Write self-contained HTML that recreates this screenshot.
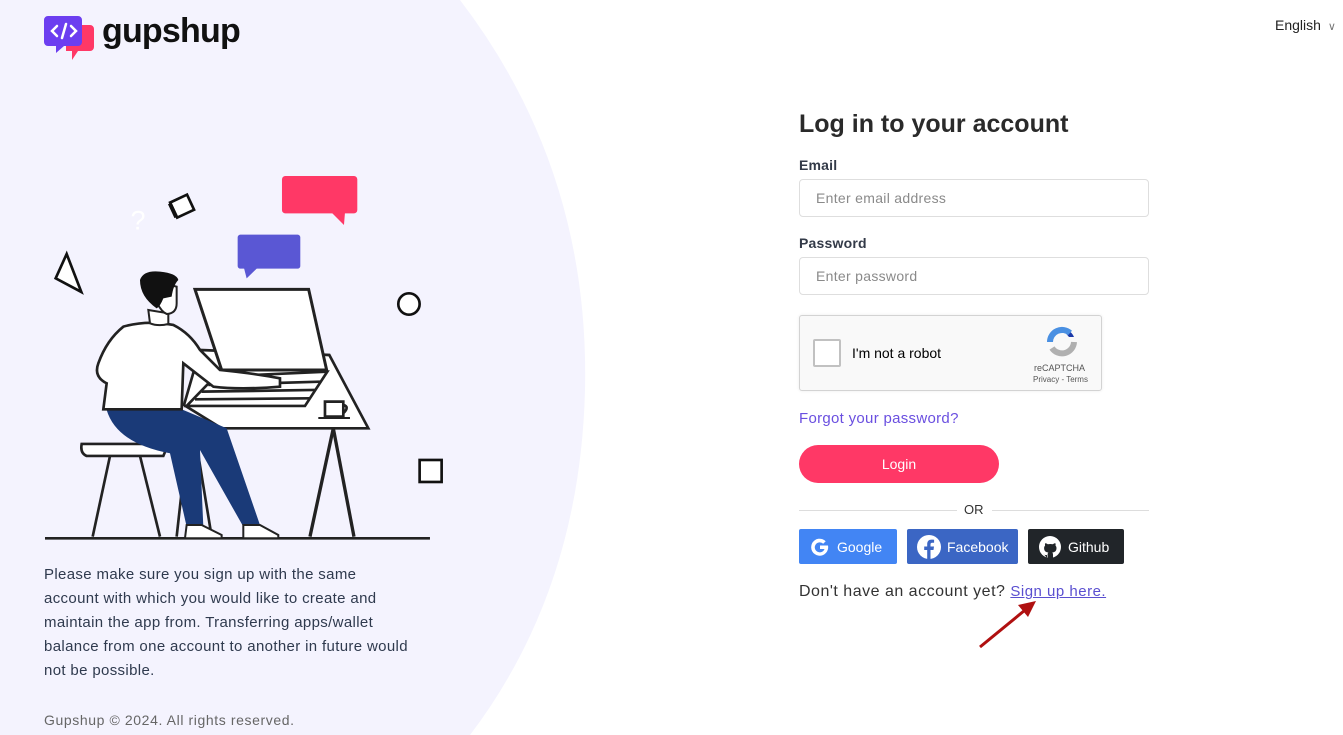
<!DOCTYPE html>
<html><head><meta charset="utf-8"><style>
*{margin:0;padding:0;box-sizing:border-box}
body{width:1343px;height:735px;position:relative;overflow:hidden;background:#fff;font-family:"Liberation Sans",sans-serif;color:#2b2b2b}
.abs{position:absolute}
.lbl{font-size:14px;color:#333a48;font-weight:bold;letter-spacing:0.2px}
.inp{border:1px solid #dedede;border-radius:4px;width:350px;height:38px;font-size:14px;color:#8a8a8a;padding:10px 16px;background:#fff;letter-spacing:0.3px}
.sb{height:35px;top:529px;border-radius:2px;color:#fff;font-size:14px;display:flex;align-items:center;padding-left:10px;gap:6px}
</style></head><body>
<svg class="abs" style="left:0;top:0" width="1343" height="735">
<path d="M0 0 L460 0 Q 590 170 585 390 Q 580 590 470 735 L0 735Z" fill="#f4f3fe"/>
<g transform="translate(40,170) scale(0.3333)">
<rect x="726" y="18" width="226" height="112" rx="10" fill="#ff3866"/>
<polygon points="875,128 912,165 915,128" fill="#ff3866"/>
<rect x="593" y="194" width="188" height="102" rx="8" fill="#5a57d4"/>
<polygon points="612,294 620,325 652,294" fill="#5a57d4"/>
<polygon points="80,252 47,325 124,366" fill="#fff" stroke="#111" stroke-width="8"/>
<circle cx="1107" cy="402" r="32" fill="#fff" stroke="#111" stroke-width="8"/>
<rect x="1139" y="870" width="66" height="66" fill="#fff" stroke="#111" stroke-width="8"/>
<g transform="rotate(-25 425 108)"><rect x="398" y="84" width="56" height="50" fill="#fff" stroke="#111" stroke-width="8"/><rect x="390" y="86" width="12" height="46" fill="#111"/></g>
<text x="272" y="178" font-size="80" fill="#fff" font-family="Liberation Sans">?</text>
<line x1="15" y1="1105" x2="1170" y2="1105" stroke="#222" stroke-width="8"/>
<line x1="880" y1="775" x2="810" y2="1100" stroke="#222" stroke-width="10"/>
<line x1="880" y1="775" x2="942" y2="1100" stroke="#222" stroke-width="10"/>
<polygon points="480,540 868,555 985,775 545,775 432,705" fill="#fff" stroke="#222" stroke-width="8"/>
<polygon points="465,358 806,358 860,600 545,600" fill="#fff" stroke="#222" stroke-width="9"/>
<polygon points="525,620 862,605 795,708 440,708" fill="#fff" stroke="#222" stroke-width="8"/>
<g stroke="#222" stroke-width="8"><line x1="505" y1="645" x2="840" y2="635"/><line x1="485" y1="665" x2="825" y2="660"/><line x1="465" y1="688" x2="810" y2="685"/></g>
<path d="M855 695 h55 v45 h-55z M910 705 q20 5 0 25" fill="#fff" stroke="#222" stroke-width="8"/>
<line x1="835" y1="744" x2="930" y2="744" stroke="#222" stroke-width="6"/>
<path d="M125 822 L385 822 L370 858 L140 858 Q120 850 125 822Z" fill="#fff" stroke="#222" stroke-width="8"/>
<g stroke="#222" stroke-width="8"><line x1="210" y1="858" x2="158" y2="1100"/><line x1="300" y1="858" x2="360" y2="1100"/><line x1="470" y1="825" x2="515" y2="1100"/><line x1="440" y1="830" x2="410" y2="1100"/></g>
<path d="M200 720 L430 720 L560 775 L660 1065 L610 1070 L480 840 L490 1070 L440 1070 L390 850 Q230 820 200 720Z" fill="#1a3a78"/>
<path d="M440 1065 l45 0 l60 30 l0 10 l-110 0z M610 1065 l50 0 l55 30 l0 10 l-105 0z" fill="#fff" stroke="#222" stroke-width="6"/>
<path d="M250 470 Q320 450 400 465 Q450 490 480 540 L540 600 Q640 610 720 625 L720 650 Q600 660 520 650 L430 580 L425 718 L190 718 L200 640 Q160 620 175 580 Q200 510 250 470Z" fill="#fff" stroke="#222" stroke-width="8"/>
<path d="M325 420 L330 460 Q355 470 385 462 L385 430Z" fill="#fff" stroke="#222" stroke-width="6"/>
<path d="M330 330 Q350 420 380 432 Q410 430 410 400 L410 350Z" fill="#fff" stroke="#222" stroke-width="6"/>
<path d="M300 330 Q310 300 360 305 Q410 310 415 330 Q400 345 395 380 L370 385 Q360 410 350 415 Q300 380 300 330Z" fill="#111"/>
</g>
<path d="M980 647 L1030 606" stroke="#b01010" stroke-width="3"/>
<polygon points="1036,601 1018,605 1028,617" fill="#b01010"/>
</svg>
<svg class="abs" style="left:44px;top:15px" width="52" height="48" viewBox="0 0 52 48">
<path d="M22 10 h24 a4 4 0 0 1 4 4 v18 a4 4 0 0 1 -4 4 h-12 l-6 9 v-9 h-6z" fill="#ff3866"/>
<path d="M4 1 h30 a4 4 0 0 1 4 4 v22 a4 4 0 0 1 -4 4 h-14 l-8 7 v-7 h-8 a4 4 0 0 1 -4 -4 v-22 a4 4 0 0 1 4 -4z" fill="#6c3ef0"/>
<path d="M13 11 l-5 5 l5 5 M27 11 l5 5 l-5 5 M22 9 l-4 14" stroke="#fff" stroke-width="2.5" fill="none" stroke-linecap="round"/>
</svg>
<div class="abs" style="left:102px;top:12px;font-size:34px;font-weight:bold;color:#111;letter-spacing:-0.8px">gupshup</div>
<div class="abs" style="left:1275px;top:17px;font-size:14px;color:#222">English <span style="color:#777;font-size:11px;margin-left:3px">&#8744;</span></div>
<div class="abs" style="left:44px;top:563px;width:366px;font-size:15px;line-height:24px;color:#2f3a4e;letter-spacing:0.35px">Please make sure you sign up with the same account with which you would like to create and maintain the app from. Transferring apps/wallet balance from one account to another in future would not be possible.</div>
<div class="abs" style="left:44px;top:712px;font-size:14px;color:#666;letter-spacing:0.6px">Gupshup © 2024. All rights reserved.</div>
<div class="abs" style="left:799px;top:110px;font-size:25px;font-weight:bold;color:#2a2a2a">Log in to your account</div>
<div class="abs lbl" style="left:799px;top:157px">Email</div>
<div class="abs inp" style="left:799px;top:179px">Enter email address</div>
<div class="abs lbl" style="left:799px;top:235px">Password</div>
<div class="abs inp" style="left:799px;top:257px">Enter password</div>
<div class="abs" style="left:799px;top:315px;width:303px;height:76px;background:#f9f9f9;border:1px solid #d3d3d3;border-radius:3px;box-shadow:0 0 3px rgba(0,0,0,.08)">
<div class="abs" style="left:13px;top:23px;width:28px;height:28px;border:2px solid #c1c1c1;border-radius:2px;background:#fff"></div>
<div class="abs" style="left:52px;top:29px;font-size:14px;color:#000">I'm not a robot</div>
<svg class="abs" style="left:246px;top:10px" width="32" height="32"><path d="M16 3 a13 13 0 0 1 12 8 l-5 0z" fill="#1c3aa9"/><path d="M4 16 a12 12 0 0 1 20 -9" stroke="#4a90e2" stroke-width="6" fill="none"/><path d="M28 16 a12 12 0 0 1 -22 6" stroke="#b0b0b0" stroke-width="6" fill="none"/></svg>
<div class="abs" style="left:234px;top:47px;font-size:9px;color:#555">reCAPTCHA</div>
<div class="abs" style="left:233px;top:59px;font-size:8px;color:#555">Privacy - Terms</div>
</div>
<div class="abs" style="left:799px;top:410px;font-size:15px;color:#6a4fe0;letter-spacing:0.3px">Forgot your password?</div>
<div class="abs" style="left:799px;top:445px;width:200px;height:38px;border-radius:19px;background:#ff3866;color:#fff;font-size:14px;text-align:center;line-height:38px">Login</div>
<div class="abs" style="left:799px;top:510px;width:158px;height:1px;background:#ddd"></div>
<div class="abs" style="left:992px;top:510px;width:157px;height:1px;background:#ddd"></div>
<div class="abs" style="left:964px;top:502px;font-size:13px;color:#333">OR</div>
<div class="abs sb" style="left:799px;width:98px;background:#4285f4"><svg width="22" height="22" viewBox="0 0 22 22"><path d="M19 9.5 h-8 v3.5 h4.5 a5 5 0 1 1 -1.3 -5.3 l2.5 -2.5 a8.5 8.5 0 1 0 2.3 4.3z" fill="#fff"/></svg>Google</div>
<div class="abs sb" style="left:907px;width:111px;background:#3b66c4"><svg width="24" height="24" viewBox="0 0 24 24"><circle cx="12" cy="12" r="12" fill="#fff"/><path d="M13.5 24 v-9 h3 l.5 -3.5 h-3.5 v-2 c0 -1 .4 -1.7 1.8 -1.7 h1.8 v-3 c-.8 -.1 -1.7 -.2 -2.6 -.2 c-2.6 0 -4.3 1.6 -4.3 4.5 v2.4 h-3 v3.5 h3 v9z" fill="#3b66c4"/></svg>Facebook</div>
<div class="abs sb" style="left:1028px;width:96px;background:#212529"><svg width="24" height="24" viewBox="0 0 24 24"><circle cx="12" cy="12" r="11" fill="#fff"/><path d="M9 23 v-3 c-3 .5 -3.5 -1.5 -4 -2 M15 23 v-3.5 c0 -1 -.3 -1.5 -.8 -2 c2.6 -.3 4.3 -1.3 4.3 -4.5 c0 -1 -.4 -1.8 -1 -2.4 c.2 -.6 .2 -1.5 -.1 -2.3 c0 0 -1 -.2 -2.6 1 a9 9 0 0 0 -5 0 c-1.6 -1.2 -2.6 -1 -2.6 -1 c-.3 .8 -.3 1.7 -.1 2.3 c-.6 .6 -1 1.4 -1 2.4 c0 3.2 1.7 4.2 4.3 4.5 c-.5 .5 -.8 1 -.8 2 v3.5z" fill="#212529"/></svg>Github</div>
<div class="abs" style="left:799px;top:583px;font-size:16px;color:#333;letter-spacing:0.5px">Don't have an account yet? <span style="color:#5a4fd0;text-decoration:underline;font-size:15px">Sign up here.</span></div>
</body></html>
